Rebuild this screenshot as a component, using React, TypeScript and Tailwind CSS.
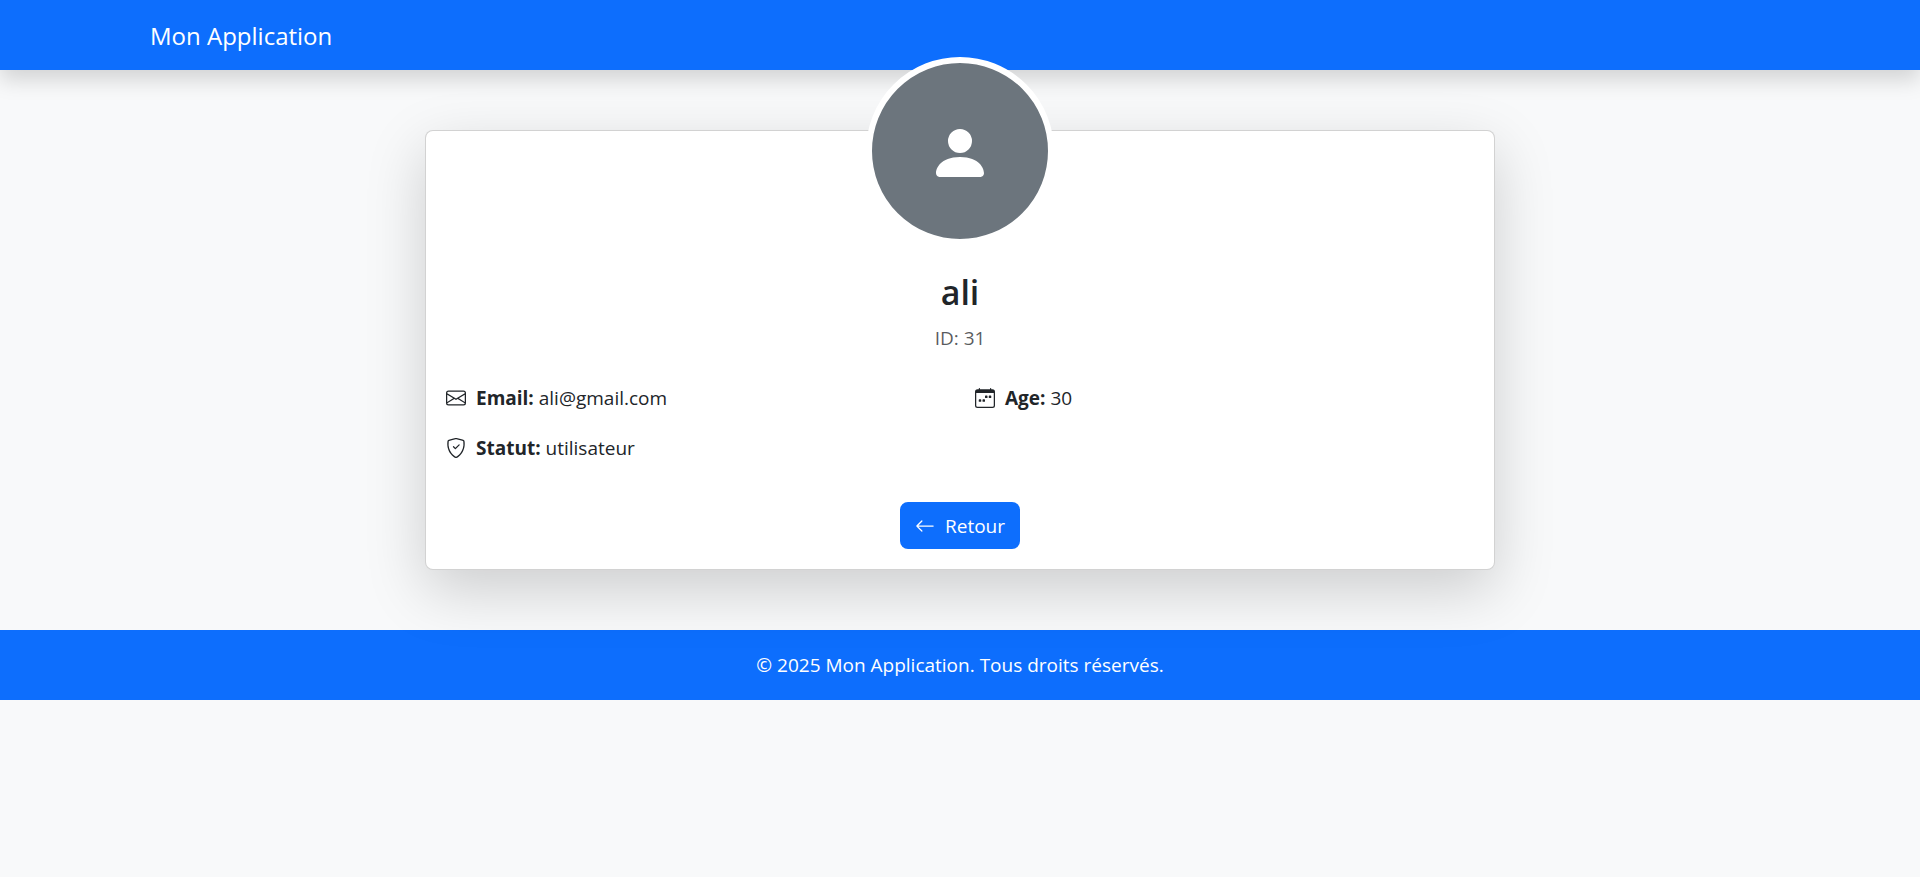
import type { ReactNode } from "react";
import {
  BsArrowLeft,
  BsCalendarWeek,
  BsEnvelope,
  BsPersonFill,
  BsShieldCheck,
} from "react-icons/bs";

function InfoItem({ icon, label, value }: { icon: ReactNode; label: string; value: string }) {
  return (
    <div className="flex items-center gap-2.5">
      {icon}
      <p>
        <strong className="font-bold">{label}</strong> {value}
      </p>
    </div>
  );
}

export default function App() {
  return (
    <div className="min-h-screen bg-[#f8f9fa] font-['Open_Sans','Noto_Sans',sans-serif] text-[19px] leading-[30px] text-[#212529]">
      <header className="bg-[#0d6efd] text-white shadow-[0_10px_20px_rgba(0,0,0,0.15)]">
        <nav className="mx-auto flex h-[70px] max-w-[1650px] items-center px-[15px] pt-0.5">
          <a href="#" className="text-2xl">
            Mon Application
          </a>
        </nav>
      </header>

      <main className="mx-auto max-w-[1100px] px-[15px] py-[60px]">
        <section className="relative rounded-lg border border-black/[0.175] bg-white p-5 shadow-[0_20px_60px_rgba(0,0,0,0.175)]">
          <div className="mx-auto -mt-[94px] flex size-[188px] items-center justify-center rounded-full border-[6px] border-white bg-[#6c757d] pt-1 text-white">
            <BsPersonFill className="size-16" aria-hidden />
          </div>

          <div className="mt-[26px] text-center">
            <h1 className="text-[34px] leading-[42px] font-semibold">ali</h1>
            <p className="mt-2.5 text-[#212529]/75">ID: 31</p>
          </div>

          <div className="mt-[30px] grid grid-cols-2 gap-x-[30px] gap-y-5">
            <InfoItem icon={<BsEnvelope className="size-5" aria-hidden />} label="Email:" value="ali@gmail.com" />
            <InfoItem icon={<BsCalendarWeek className="size-5" aria-hidden />} label="Age:" value="30" />
            <InfoItem icon={<BsShieldCheck className="size-5" aria-hidden />} label="Statut:" value="utilisateur" />
          </div>

          <div className="mt-[39px] flex justify-center">
            <a
              href="#"
              className="flex h-[47px] items-center gap-2.5 rounded-lg bg-[#0d6efd] px-[15px] text-white"
            >
              <BsArrowLeft className="size-5" aria-hidden />
              Retour
            </a>
          </div>
        </section>
      </main>

      <footer className="bg-[#0d6efd] p-5 text-center text-white">
        <p>© 2025 Mon Application. Tous droits réservés.</p>
      </footer>
    </div>
  );
}
